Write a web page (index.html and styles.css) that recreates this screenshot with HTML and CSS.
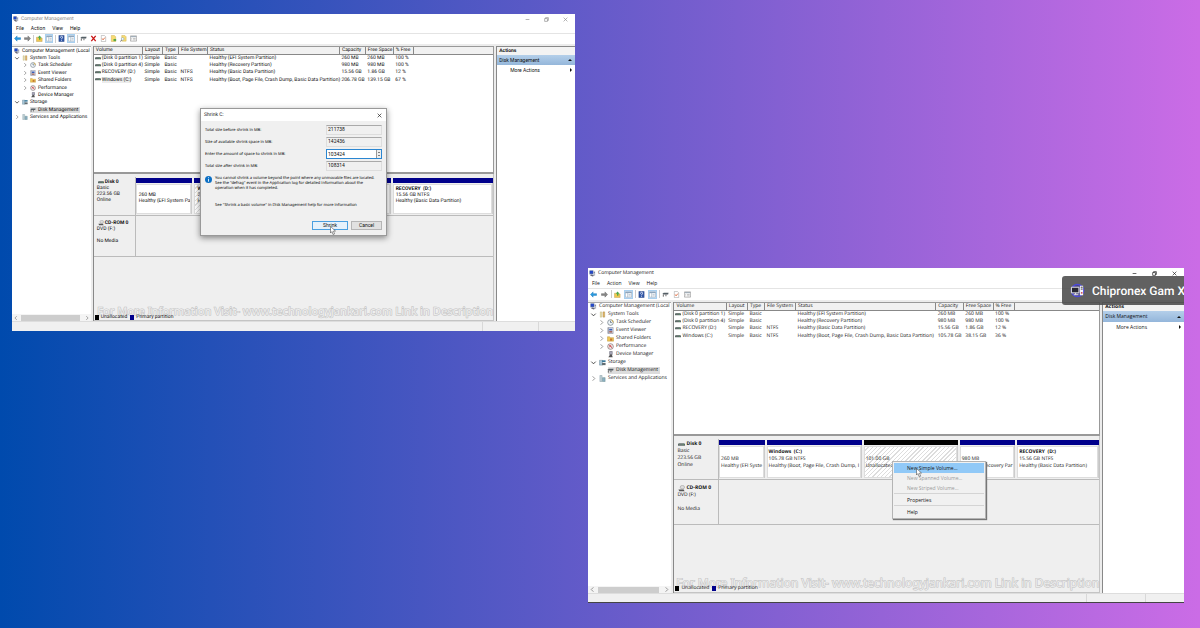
FILE: index.html
```html
<!DOCTYPE html>
<html lang="en">
<head>
<meta charset="utf-8">
<title>Computer Management</title>
<link rel="stylesheet" href="styles.css">
</head>
<body>
<svg class="defs" aria-hidden="true">
  <symbol id="i-computer" viewBox="0 0 16 16"><path d="M1 1h9v9H1z" fill="#5b6f9c"/><path d="M2 2h7v6H2z" fill="#2448c8"/><path d="M10 3h4v10h-4z" fill="#b5bcc8"/><path d="M2 12l4-2 6 3-4 2z" fill="#667"/><path d="M11 5h2v1h-2z" fill="#335"/></symbol>
  <symbol id="i-back" viewBox="0 0 16 16"><path d="M1 8l6-6v4h8v4H7v4z" fill="#2b9be0" stroke="#1676b8"/></symbol>
  <symbol id="i-fwd" viewBox="0 0 16 16"><path d="M15 8L9 2v4H1v4h8v4z" fill="#888" stroke="#666"/></symbol>
  <symbol id="i-up" viewBox="0 0 16 16"><path d="M1 5h5l1 2h7v8H1z" fill="#f0c850" stroke="#b99a50"/><path d="M8 1l5 5h-3v5H7V6H4z" fill="#4aa84a"/></symbol>
  <symbol id="i-pane" viewBox="0 0 16 16"><path d="M1 2h14v12H1z" fill="#fff" stroke="#8296a8"/><path d="M1 2h14v3H1z" fill="#8da5bb"/><path d="M6 5v9M8 8h5M8 11h5" stroke="#7790a8"/></symbol>
  <symbol id="i-help" viewBox="0 0 16 16"><path d="M2 1h12v14H2z" fill="#3158a8" stroke="#26427f"/><path d="M5.500 6c0-4 5-4 5-1 0 2-2.500 2-2.500 4.500M8 11v2" fill="none" stroke="#fff" stroke-width="1.800"/></symbol>
  <symbol id="i-disk" viewBox="0 0 16 16"><path d="M0 7l2-2h12l2 2v4H0z" fill="#5c6a66"/><path d="M2 7h12" stroke="#a9b1ae"/><path d="M11 8h2v1h-2z" fill="#42b860"/></symbol>
  <symbol id="i-disk2" viewBox="0 0 16 16"><path d="M1 6l3-2h11l-1 4H3z" fill="#555f66"/><path d="M3 8v5M9 8v4" stroke="#555" stroke-width="2"/></symbol>
  <symbol id="i-x" viewBox="0 0 16 16"><path d="M3 2l10 12M13 2L3 14" stroke="#c81414" stroke-width="3"/></symbol>
  <symbol id="i-check" viewBox="0 0 16 16"><path d="M3 1h7l3 3v11H3z" fill="#fff" stroke="#888"/><path d="M5 8l2 3 4-5" fill="none" stroke="#e06030" stroke-width="2"/></symbol>
  <symbol id="i-newf" viewBox="0 0 16 16"><path d="M3 1h7l3 3v11H3z" fill="#f8dc72" stroke="#c9a94a"/><path d="M8 9h6v5H8z" fill="#58a846"/></symbol>
  <symbol id="i-find" viewBox="0 0 16 16"><path d="M4 1h7l3 3v10H4z" fill="#f8dc72" stroke="#c9a94a"/><circle cx="6" cy="9" r="3" fill="#fff" stroke="#5d90b8"/><path d="M4 11l-3 4" stroke="#667" stroke-width="2"/></symbol>
  <symbol id="i-list" viewBox="0 0 16 16"><path d="M1 2h14v12H1z" fill="#fff" stroke="#666"/><path d="M2 3h12v2H2z" fill="#8495a3"/><path d="M3 8h2M3 11h2M7 8h6M7 11h6" stroke="#777"/></symbol>
  <symbol id="i-tools" viewBox="0 0 16 16"><path d="M3 2h3v12H3z" fill="#ece3b0" stroke="#b5a96a"/><path d="M9 2h4v12H9z" fill="#e2b562" stroke="#a8874a"/></symbol>
  <symbol id="i-clock" viewBox="0 0 16 16"><circle cx="8" cy="8" r="6.500" fill="#eef4f8" stroke="#66737d" stroke-width="1.500"/><path d="M8 4v4h3" fill="none" stroke="#456" stroke-width="1.500"/><path d="M10 2a6 6 0 0 1 4 6" fill="none" stroke="#e0b23c" stroke-width="2"/></symbol>
  <symbol id="i-event" viewBox="0 0 16 16"><path d="M2 1h12v14H2z" fill="#dfe5f2" stroke="#667"/><path d="M5 4h7v4H5z" fill="#3a5fb4"/><path d="M5 9h7v4H5z" fill="#a36b62"/><path d="M3 2v12" stroke="#556"/></symbol>
  <symbol id="i-folder" viewBox="0 0 16 16"><path d="M1 4h5l2 2h7v8H1z" fill="#efc653" stroke="#b8913a"/><path d="M7 8h5v5H7z" fill="#c07838"/></symbol>
  <symbol id="i-perf" viewBox="0 0 16 16"><circle cx="8" cy="8" r="6.500" fill="#f4e6e6" stroke="#77706f" stroke-width="1.500"/><path d="M4 4l8 8M5 10l3-5 2 4" fill="none" stroke="#c43c3c" stroke-width="1.500"/></symbol>
  <symbol id="i-device" viewBox="0 0 16 16"><path d="M6 1h6v7H6z" fill="#aab" stroke="#445"/><path d="M7 8l-4 6h10l-2-6" fill="#555"/></symbol>
  <symbol id="i-storage" viewBox="0 0 16 16"><path d="M1 3h7v11H1z" fill="#a8c6d8" stroke="#60818f"/><path d="M7 3h8v4H7z" fill="#38789a"/><path d="M7 9h8v5H7z" fill="#5f6b70"/></symbol>
  <symbol id="i-serv" viewBox="0 0 16 16"><path d="M2 1h5v14H2z" fill="#c2d2d8" stroke="#7c959e"/><path d="M8 6h6v9H8z" fill="#8bb0c4" stroke="#688"/></symbol>
  <symbol id="i-cd" viewBox="0 0 16 16"><ellipse cx="10" cy="5" rx="5" ry="4" fill="#ddd" stroke="#888"/><path d="M1 10h12l2 4H3z" fill="#555"/></symbol>
  <symbol id="i-open" viewBox="0 0 16 16"><path d="M3 6l5 5 5-5" fill="none" stroke="#333" stroke-width="2"/></symbol>
  <symbol id="i-closed" viewBox="0 0 16 16"><path d="M6 3l5 5-5 5" fill="none" stroke="#888" stroke-width="2"/></symbol>
  <symbol id="i-min" viewBox="0 0 16 16"><path d="M2 8h12" stroke="currentColor" stroke-width="2"/></symbol>
  <symbol id="i-max" viewBox="0 0 16 16"><path d="M2 5h9v9H2zM5 5V2h9v9h-3" fill="none" stroke="currentColor" stroke-width="2"/></symbol>
  <symbol id="i-close" viewBox="0 0 16 16"><path d="M2 2l12 12M14 2L2 14" stroke="currentColor" stroke-width="2"/></symbol>
  <symbol id="i-cursor" viewBox="0 0 12 18"><path d="M1 1v13l3-3 2 6 3-1-2-6h4z" fill="#fff" stroke="#333"/></symbol>
  <symbol id="i-info" viewBox="0 0 16 16"><circle cx="8" cy="8" r="8" fill="#0b6fc4"/><path d="M8 3v2M8 7v6" stroke="#fff" stroke-width="2"/></symbol>
</svg>

<main class="desktop">
  <section class="window window-back">
    <header class="titlebar">
      <svg class="icon"><use href="#i-computer"/></svg><h1>Computer Management</h1>
      <div class="controls">
        <button aria-label="Minimize"><svg><use href="#i-min"/></svg></button>
        <button aria-label="Restore"><svg><use href="#i-max"/></svg></button>
        <button aria-label="Close"><svg><use href="#i-close"/></svg></button>
      </div>
    </header>
    <nav class="menubar"><button>File</button><button>Action</button><button>View</button><button>Help</button></nav>
    <div class="toolbar">
      <button aria-label="Back"><svg><use href="#i-back"/></svg></button>
      <button aria-label="Forward"><svg><use href="#i-fwd"/></svg></button><i></i>
      <button aria-label="Up"><svg><use href="#i-up"/></svg></button>
      <button class="on" aria-label="Console tree"><svg><use href="#i-pane"/></svg></button><i></i>
      <button aria-label="Help"><svg><use href="#i-help"/></svg></button>
      <button class="on" aria-label="Action pane"><svg><use href="#i-pane"/></svg></button><i></i>
      <button aria-label="Refresh"><svg><use href="#i-disk2"/></svg></button>
      <button aria-label="Delete"><svg><use href="#i-x"/></svg></button>
      <button aria-label="Properties"><svg><use href="#i-check"/></svg></button>
      <button aria-label="Open"><svg><use href="#i-newf"/></svg></button>
      <button aria-label="Explore"><svg><use href="#i-find"/></svg></button>
      <button aria-label="List"><svg><use href="#i-list"/></svg></button>
    </div>
    <div class="panes">
      <aside class="tree-pane">
        <ul class="tree">
          <li class="root"><svg><use href="#i-computer"/></svg><span>Computer Management (Local</span></li>
          <li><svg><use href="#i-open"/></svg><svg><use href="#i-tools"/></svg><span>System Tools</span></li>
          <li class="sub"><svg><use href="#i-closed"/></svg><svg><use href="#i-clock"/></svg><span>Task Scheduler</span></li>
          <li class="sub"><svg><use href="#i-closed"/></svg><svg><use href="#i-event"/></svg><span>Event Viewer</span></li>
          <li class="sub"><svg><use href="#i-closed"/></svg><svg><use href="#i-folder"/></svg><span>Shared Folders</span></li>
          <li class="sub"><svg><use href="#i-closed"/></svg><svg><use href="#i-perf"/></svg><span>Performance</span></li>
          <li class="sub"><svg></svg><svg><use href="#i-device"/></svg><span>Device Manager</span></li>
          <li><svg><use href="#i-open"/></svg><svg><use href="#i-storage"/></svg><span>Storage</span></li>
          <li class="sub selected"><svg></svg><svg><use href="#i-disk2"/></svg><span>Disk Management</span></li>
          <li><svg><use href="#i-closed"/></svg><svg><use href="#i-serv"/></svg><span>Services and Applications</span></li>
        </ul>
        <div class="hscroll"><svg class="left"><use href="#i-closed"/></svg><b></b><svg><use href="#i-closed"/></svg></div>
      </aside>
      <div class="center">
        <div class="volumes">
          <table>
            <colgroup><col class="c-vol"><col class="c-lay"><col class="c-type"><col class="c-fs"><col class="c-stat"><col class="c-cap"><col class="c-free"><col class="c-pct"><col></colgroup>
            <thead><tr><th>Volume</th><th>Layout</th><th>Type</th><th>File System</th><th>Status</th><th>Capacity</th><th>Free Space</th><th>% Free</th><th></th></tr></thead>
            <tbody>
              <tr><td><svg><use href="#i-disk"/></svg>(Disk 0 partition 1)</td><td>Simple</td><td>Basic</td><td></td><td>Healthy (EFI System Partition)</td><td>260 MB</td><td>260 MB</td><td>100 %</td><td></td></tr>
              <tr><td><svg><use href="#i-disk"/></svg>(Disk 0 partition 4)</td><td>Simple</td><td>Basic</td><td></td><td>Healthy (Recovery Partition)</td><td>980 MB</td><td>980 MB</td><td>100 %</td><td></td></tr>
              <tr><td><svg><use href="#i-disk"/></svg>RECOVERY (D:)</td><td>Simple</td><td>Basic</td><td>NTFS</td><td>Healthy (Basic Data Partition)</td><td>15.56 GB</td><td>1.86 GB</td><td>12 %</td><td></td></tr>
              <tr><td><svg><use href="#i-disk"/></svg><mark>Windows (C:)</mark></td><td>Simple</td><td>Basic</td><td>NTFS</td><td>Healthy (Boot, Page File, Crash Dump, Basic Data Partition)</td><td>206.78 GB</td><td>139.15 GB</td><td>67 %</td><td></td></tr>
            </tbody>
          </table>
        </div>
        <div class="disks">
          <div class="disk">
            <div class="disk-label"><strong><svg><use href="#i-disk"/></svg>Disk 0</strong><p>Basic</p><p>223.56 GB</p><p>Online</p></div>
            <div class="parts parts-back">
              <div class="part"><div><p></p><p>260 MB</p><p>Healthy (EFI System Par</p></div></div>
              <div class="part hatched"><div><p><b>Windows (C:)</b></p><p>206.78 GB NTFS</p><p>Healthy (Boot, Page File)</p></div></div>
              <div class="part"><div><p></p><p>980 MB</p><p></p></div></div>
              <div class="part"><div><p><b>RECOVERY &nbsp;(D:)</b></p><p>15.56 GB NTFS</p><p>Healthy (Basic Data Partition)</p></div></div>
            </div>
          </div>
          <div class="disk cdrom">
            <div class="disk-label"><strong><svg><use href="#i-cd"/></svg>CD-ROM 0</strong><p>DVD (F:)</p><p></p><p>No Media</p></div>
          </div>
          <div class="legend"><i class="black"></i>Unallocated<i class="navy"></i>Primary partition</div>
          <p class="watermark">For More Information Visit- www.technologyjankari.com Link in Description</p>
        </div>
      </div>
      <aside class="actions"><h2>Actions</h2><button class="group">Disk Management<i class="tri-up"></i></button><button class="more">More Actions<i class="tri-right"></i></button></aside>
    </div>
    <footer class="status"><i></i><i></i></footer>

    <form class="dialog">
      <header>Shrink C:<button type="button" aria-label="Close dialog"><svg><use href="#i-close"/></svg></button></header>
      <div class="fields">
        <label for="f1">Total size before shrink in MB:</label><input id="f1" value="211738" readonly>
        <label for="f2">Size of available shrink space in MB:</label><input id="f2" value="142436" readonly>
        <label for="f3">Enter the amount of space to shrink in MB:</label><div class="spin"><input id="f3" value="103424"><span><i class="tri-up"></i><i class="tri-down"></i></span></div>
        <label for="f4">Total size after shrink in MB:</label><input id="f4" value="108314" readonly>
      </div>
      <div class="note"><svg><use href="#i-info"/></svg><p>You cannot shrink a volume beyond the point where any unmovable files are located.<br>See the "defrag" event in the Application log for detailed information about the<br>operation when it has completed.</p></div>
      <p class="hint">See "Shrink a basic volume" in Disk Management help for more information</p>
      <div class="buttons"><button type="button" class="primary">Shrink<svg class="cursor"><use href="#i-cursor"/></svg></button><button type="button">Cancel</button></div>
    </form>
  </section>

  <section class="window window-front">
    <header class="titlebar">
      <svg class="icon"><use href="#i-computer"/></svg><h1>Computer Management</h1>
      <div class="controls">
        <button aria-label="Minimize"><svg><use href="#i-min"/></svg></button>
        <button aria-label="Restore"><svg><use href="#i-max"/></svg></button>
        <button aria-label="Close"><svg><use href="#i-close"/></svg></button>
      </div>
    </header>
    <nav class="menubar"><button>File</button><button>Action</button><button>View</button><button>Help</button></nav>
    <div class="toolbar">
      <button aria-label="Back"><svg><use href="#i-back"/></svg></button>
      <button aria-label="Forward"><svg><use href="#i-fwd"/></svg></button><i></i>
      <button aria-label="Up"><svg><use href="#i-up"/></svg></button>
      <button class="on" aria-label="Console tree"><svg><use href="#i-pane"/></svg></button><i></i>
      <button aria-label="Help"><svg><use href="#i-help"/></svg></button>
      <button class="on" aria-label="Action pane"><svg><use href="#i-pane"/></svg></button><i></i>
      <button aria-label="Refresh"><svg><use href="#i-disk2"/></svg></button>
      <button aria-label="Properties"><svg><use href="#i-check"/></svg></button>
      <button aria-label="List"><svg><use href="#i-list"/></svg></button>
    </div>
    <div class="panes">
      <aside class="tree-pane">
        <ul class="tree">
          <li class="root"><svg><use href="#i-computer"/></svg><span>Computer Management (Local</span></li>
          <li><svg><use href="#i-open"/></svg><svg><use href="#i-tools"/></svg><span>System Tools</span></li>
          <li class="sub"><svg><use href="#i-closed"/></svg><svg><use href="#i-clock"/></svg><span>Task Scheduler</span></li>
          <li class="sub"><svg><use href="#i-closed"/></svg><svg><use href="#i-event"/></svg><span>Event Viewer</span></li>
          <li class="sub"><svg><use href="#i-closed"/></svg><svg><use href="#i-folder"/></svg><span>Shared Folders</span></li>
          <li class="sub"><svg><use href="#i-closed"/></svg><svg><use href="#i-perf"/></svg><span>Performance</span></li>
          <li class="sub"><svg></svg><svg><use href="#i-device"/></svg><span>Device Manager</span></li>
          <li><svg><use href="#i-open"/></svg><svg><use href="#i-storage"/></svg><span>Storage</span></li>
          <li class="sub selected"><svg></svg><svg><use href="#i-disk2"/></svg><span>Disk Management</span></li>
          <li><svg><use href="#i-closed"/></svg><svg><use href="#i-serv"/></svg><span>Services and Applications</span></li>
        </ul>
        <div class="hscroll"><svg class="left"><use href="#i-closed"/></svg><b></b><svg><use href="#i-closed"/></svg></div>
      </aside>
      <div class="center">
        <div class="volumes">
          <table>
            <colgroup><col class="c-vol"><col class="c-lay"><col class="c-type"><col class="c-fs"><col class="c-stat"><col class="c-cap"><col class="c-free"><col class="c-pct"><col></colgroup>
            <thead><tr><th>Volume</th><th>Layout</th><th>Type</th><th>File System</th><th>Status</th><th>Capacity</th><th>Free Space</th><th>% Free</th><th></th></tr></thead>
            <tbody>
              <tr><td><svg><use href="#i-disk"/></svg>(Disk 0 partition 1)</td><td>Simple</td><td>Basic</td><td></td><td>Healthy (EFI System Partition)</td><td>260 MB</td><td>260 MB</td><td>100 %</td><td></td></tr>
              <tr><td><svg><use href="#i-disk"/></svg>(Disk 0 partition 4)</td><td>Simple</td><td>Basic</td><td></td><td>Healthy (Recovery Partition)</td><td>980 MB</td><td>980 MB</td><td>100 %</td><td></td></tr>
              <tr><td><svg><use href="#i-disk"/></svg>RECOVERY (D:)</td><td>Simple</td><td>Basic</td><td>NTFS</td><td>Healthy (Basic Data Partition)</td><td>15.56 GB</td><td>1.86 GB</td><td>12 %</td><td></td></tr>
              <tr><td><svg><use href="#i-disk"/></svg>Windows (C:)</td><td>Simple</td><td>Basic</td><td>NTFS</td><td>Healthy (Boot, Page File, Crash Dump, Basic Data Partition)</td><td>105.78 GB</td><td>38.15 GB</td><td>36 %</td><td></td></tr>
            </tbody>
          </table>
        </div>
        <div class="disks">
          <div class="disk">
            <div class="disk-label"><strong><svg><use href="#i-disk"/></svg>Disk 0</strong><p>Basic</p><p>223.56 GB</p><p>Online</p></div>
            <div class="parts parts-front">
              <div class="part"><div><p></p><p>260 MB</p><p>Healthy (EFI Syste</p></div></div>
              <div class="part"><div><p><b>Windows &nbsp;(C:)</b></p><p>105.78 GB NTFS</p><p>Healthy (Boot, Page File, Crash Dump, I</p></div></div>
              <div class="part hatched unallocated"><div><p></p><p>101.00 GB</p><p>Unallocated</p></div></div>
              <div class="part"><div><p></p><p>980 MB</p><p>Healthy (Recovery Par</p></div></div>
              <div class="part"><div><p><b>RECOVERY &nbsp;(D:)</b></p><p>15.56 GB NTFS</p><p>Healthy (Basic Data Partition)</p></div></div>
              <menu class="context">
                <li><button class="hot">New Simple Volume...<svg class="cursor"><use href="#i-cursor"/></svg></button></li>
                <li><button disabled>New Spanned Volume...</button></li>
                <li><button disabled>New Striped Volume...</button></li>
                <li class="split"><button>Properties</button></li>
                <li class="split"><button>Help</button></li>
              </menu>
            </div>
          </div>
          <div class="disk cdrom">
            <div class="disk-label"><strong><svg><use href="#i-cd"/></svg>CD-ROM 0</strong><p>DVD (F:)</p><p></p><p>No Media</p></div>
          </div>
          <div class="legend"><i class="black"></i>Unallocated<i class="navy"></i>Primary partition</div>
          <p class="watermark">For More Information Visit- www.technologyjankari.com Link in Description</p>
        </div>
      </div>
      <aside class="actions"><h2>Actions</h2><button class="group">Disk Management<i class="tri-up"></i></button><button class="more">More Actions<i class="tri-right"></i></button></aside>
    </div>
    <footer class="status"><i></i><i></i></footer>
    <div class="banner">
      <svg viewBox="0 0 32 32"><circle cx="16" cy="16" r="13" fill="#4a4580" stroke="#4b48dc" stroke-width="3"/><path d="M3 9h16v12H3z" fill="#262631" stroke="#eee" stroke-width="2"/><path d="M21 6h7v20h-7z" fill="#f5f5fa"/><path d="M23 9h4M23 13h4" stroke="#333" stroke-width="2"/><path d="M8 25h10M12 21v4" stroke="#eee" stroke-width="2"/><circle cx="25" cy="21" r="2" fill="#d04650"/></svg>
      <span>Chipronex Gam X</span>
    </div>
  </section>
</main>
</body>
</html>
```

FILE: styles.css
```css
* { box-sizing: border-box; }
body, h1, h2, p, ul, menu { margin: 0; padding: 0; }
ul, menu { list-style: none; }
button, input { font: inherit; color: inherit; margin: 0; padding: 0; border: 0; background: none; }
body { text-rendering: geometricPrecision; }
.defs { position: absolute; width: 0; height: 0; }

.desktop {
  display: grid;
  grid-template-columns: 563fr 596fr;
  gap: 13px;
  min-height: 100vh;
  padding: 14px 16px 25px 12px;
  background: linear-gradient(90deg, #004aad, #cb6ce6);
}

.window {
  --row: 7px;
  --head: 7px;
  --line: 6px;
  --icon: 6px;
  --tool: 8px;
  --tree: 74px;
  --upper: 128px;
  --disk: 39px;
  --cd: 41px;
  position: relative;
  display: flex;
  flex-direction: column;
  min-width: 0;
  background: #fff;
  color: #111;
  font: 5px/6px Roboto, "Open Sans", sans-serif;
  white-space: nowrap;
}
.window svg { flex: none; display: block; width: var(--icon); height: var(--icon); }
.window-back { align-self: start; aspect-ratio: 563 / 317; }
.window-front {
  --line: 7px;
  --icon: 7px;
  --tool: 9px;
  --tree: 79px;
  --upper: 134px;
  --disk: 41px;
  --cd: 45px;
  align-self: end;
  aspect-ratio: 596 / 335;
  font-family: "Open Sans", sans-serif;
  line-height: 7px;
  border-bottom: 1px solid #444;
}

.titlebar { display: flex; align-items: center; gap: 2px; height: 10px; padding: 0 7px 0 1px; }
.titlebar h1 { flex: 1; font-size: 5px; font-weight: 400; }
.window-back .titlebar { color: #888; }
.controls { display: flex; gap: 14px; }
.window .controls svg { width: 5px; height: 5px; }
.menubar { display: flex; align-items: center; gap: 7px; height: 9px; padding: 0 4px 1px; }
.toolbar { display: flex; align-items: center; gap: 2px; height: 11px; padding: 0 1px 1px; border-top: 1px solid #e4e4e4; }
.toolbar button { display: grid; place-items: center; width: var(--tool); height: 9px; flex: none; }
.toolbar .on { background: #cfe5f7; outline: 1px solid #a9d0ef; outline-offset: -1px; }
.window .toolbar svg { width: 7px; height: 7px; }
.toolbar i { width: 0; height: 8px; border-left: 1px solid #ccc; margin-right: -1px; }
.window-front .toolbar { height: 12px; }
.window-front .menubar { height: 10px; padding-bottom: 0; }
.window-front .controls { gap: 15px; }

.panes { flex: 1; display: grid; grid-template-columns: 14% minmax(0, 1fr) 14%; gap: 2px; min-height: 0; padding-top: 2px; background: #ececec; }
.window-front .panes { grid-template-columns: 14% minmax(0, 1fr) 13.7%; }
.tree-pane { display: flex; flex-direction: column; justify-content: space-between; background: #fff; border-top: 1px solid #aaa; overflow: hidden; }
.tree { display: grid; grid-template-rows: repeat(10, 1fr); height: var(--tree); padding-left: 2px; }
.tree li { display: flex; align-items: center; gap: 2px; overflow: hidden; }
.tree .sub { padding-left: 8px; }
.selected span { background: #dcdcdc; margin-left: -8px; padding: 0 2px 0 8px; }
.selected svg { position: relative; z-index: 1; }
.hscroll { display: flex; align-items: center; gap: 2px; height: 7px; padding: 0 1px; background: #f4f4f4; }
.hscroll b { flex: 1; height: 6px; background: #cdcdcd; margin-right: 8px; }
.hscroll .left { transform: rotate(180deg); }
.hscroll b + svg { margin-left: -6px; }

.center { display: flex; flex-direction: column; min-width: 0; border-left: 1px solid #888; }
.volumes { height: var(--upper); background: #fff; border: solid #999; border-width: 1px 1px 2px 0; }
.volumes table { width: 100%; table-layout: fixed; border-collapse: collapse; }
.volumes th { height: var(--head); padding: 0 2px; background: #f1f1f1; border-right: 1px solid #888; border-bottom: 1px solid #888; font-weight: 400; text-align: left; line-height: 6px; }
.volumes th:last-child { border-right: 0; }
.volumes td { height: var(--row); padding: 0 2px; line-height: 7px; }
.volumes td:first-child { padding-left: 1px; }
.volumes td svg { display: inline-block; vertical-align: middle; width: 6px; height: 6px; margin-right: 1px; }
mark { color: inherit; background: #ececec; }
.c-vol { width: 12.2%; } .c-lay { width: 5%; } .c-type { width: 4%; } .c-fs { width: 7.3%; } .c-stat { width: 33%; }
.c-cap { width: 6.5%; } .c-free { width: 7%; } .c-pct { width: 5%; }

.disks { position: relative; flex: 1; display: flex; flex-direction: column; padding-top: 3px; background: #efefef; border: solid #c4c4c4; border-width: 0 1px 1px 0; }
.disk { display: grid; grid-template-columns: 10.5% minmax(0, 1fr); height: var(--disk); border-bottom: 1px solid #bbb; }
.cdrom { height: var(--cd); }
.disk-label { padding: 2px 0 0 3px; border-right: 1px solid #bbb; line-height: var(--line); }
.cdrom .disk-label { padding-top: 4px; }
.window-front .cdrom .disk-label { padding-top: 5px; }
.disk-label strong { display: flex; align-items: center; gap: 1px; padding-left: 1px; }
.disk-label p { min-height: var(--line); }
.parts { position: relative; display: grid; gap: 2px; padding: 1px 0; }
.parts-back { grid-template-columns: 57fr 138fr 57fr 101fr; }
.parts-front { grid-template-columns: 46fr 96fr 95fr 56fr 83fr; }
.part { display: flex; flex-direction: column; gap: 1px; min-width: 0; border-right: 1px solid #ccc; }
.part::before { content: ""; height: 5px; background: #00008b; margin-right: -1px; }
.part > div { flex: 1; padding: 1px 2px 0; background: #fff; border: 1px solid #ddd; line-height: var(--line); overflow: hidden; }
.window-front .part > div { padding: 2px 1px 0; }
.part p { min-height: var(--line); }
.part.hatched > div { background: repeating-linear-gradient(135deg, #fff 0 2px, #ddd 2px 3px); }
.part.unallocated::before { background: #000; }
.legend { position: relative; z-index: 1; display: flex; align-items: center; gap: 2px; margin-top: auto; padding: 0; }
.legend i { width: 4px; height: 5px; margin: 0 0 0 1px; }
.black { background: #000; }
.navy { background: #00008b; }
.watermark { position: absolute; right: 0; bottom: 1px; font: 500 11px/15px "Noto Sans", sans-serif; color: #ececec; -webkit-text-stroke: 1px #c0c0c0; paint-order: stroke fill; }
.window-front .watermark { bottom: 2px; font-size: 12px; font-weight: 400; }

.actions { background: #fff; border: solid #888; border-width: 1px 0 0 1px; }
.actions h2 { height: 8px; padding-left: 2px; font-size: 5px; line-height: 8px; background: #f3f3f3; }
.actions button { display: flex; align-items: center; justify-content: space-between; width: 100%; height: 10px; padding: 0 3px 0 2px; }
.actions .group { background: linear-gradient(#b4cfea, #94b6da); }
.actions .more { padding-left: 13px; }
.window-front .actions .group { height: 11px; }
[class^="tri-"] { border: 2px solid transparent; }
.tri-up { border-bottom-color: #111; border-top-width: 0; }
.tri-right { border-left-color: #111; border-right-width: 0; }
.tri-down { border-top-color: #111; border-bottom-width: 0; }
.status { display: flex; justify-content: flex-end; height: 10px; background: #f0f0f0; border-top: 1px solid #ddd; }
.window-front .status { height: 9px; }
.status i { width: 10%; border-left: 1px solid #d8d8d8; }
.status i:last-child { width: 6.5%; }

.dialog { position: absolute; left: 33.4%; top: 94px; width: 187px; padding: 0 4px 5px; background: #f0f0f0; border: 1px solid #999; box-shadow: 0 2px 6px rgb(0 0 0 / 45%); }
.dialog header { display: flex; align-items: center; justify-content: space-between; height: 12px; margin: 0 -4px; padding: 0 4px 0 3px; background: #fff; }
.dialog header svg { width: 5px; height: 5px; }
.fields { display: grid; grid-template-columns: 1fr 56px; row-gap: 2px; padding-top: 4px; }
.fields label { height: 10px; padding-top: 2px; font: 4px/8px "Noto Sans", sans-serif; color: #000; }
.fields input { min-width: 0; width: 100%; height: 10px; padding: 0 2px 3px 1px; border: 1px solid #ddd; border-top-color: #aaa; }
.fields .spin { display: flex; height: 10px; background: #fff; border: 1px solid #2b86d1; }
.fields .spin input { border: 0; height: 8px; padding: 0 1px; }
.spin span { display: flex; flex-direction: column; justify-content: center; gap: 2px; padding: 0 1px; border-left: 1px solid #999; background: #eee; }
.spin i { border-width: 1px; }
.note { display: flex; gap: 3px; margin-top: 5px; font: 4px/5px "Noto Sans", sans-serif; color: #000; }
.window .note svg { width: 7px; height: 7px; }
.hint { margin: 12px 0 0 10px; font: 4px/6px "Noto Sans", sans-serif; color: #000; }
.buttons { display: flex; justify-content: flex-end; gap: 3px; margin-top: 12px; }
.buttons button { width: 31px; height: 9px; background: #e1e1e1; border: 1px solid #b5b5b5; line-height: 7px; }
.buttons .primary { position: relative; width: 36px; background: #e5f1fb; border-color: #4a9fe0; }
.window .cursor { position: absolute; left: 50%; top: 50%; width: 6px; height: 9px; }

.context { position: absolute; z-index: 2; left: 45.5%; top: 22px; width: 94px; padding: 1px; background: #f1f1f1; border: 1px solid #b4b4b4; box-shadow: 1px 1px 1px #777; }
.context button { position: relative; display: block; width: 100%; height: 10px; padding-left: 13px; text-align: left; }
.context .hot { background: #91c9f7; }
.context .hot .cursor { left: 22px; }
.context button:disabled { color: #999; }
.context .split { border-top: 1px solid #d4d4d4; padding-top: 1px; }
.banner { position: absolute; top: 8px; right: 0; display: flex; align-items: center; gap: 7px; width: 122px; height: 29px; padding-left: 8px; overflow: hidden; border-radius: 3px 0 0 3px; background: rgb(75 75 75 / 88%); color: #fff; font: 500 12px/16px Roboto, sans-serif; }
.window .banner svg { width: 15px; height: 15px; }
```
